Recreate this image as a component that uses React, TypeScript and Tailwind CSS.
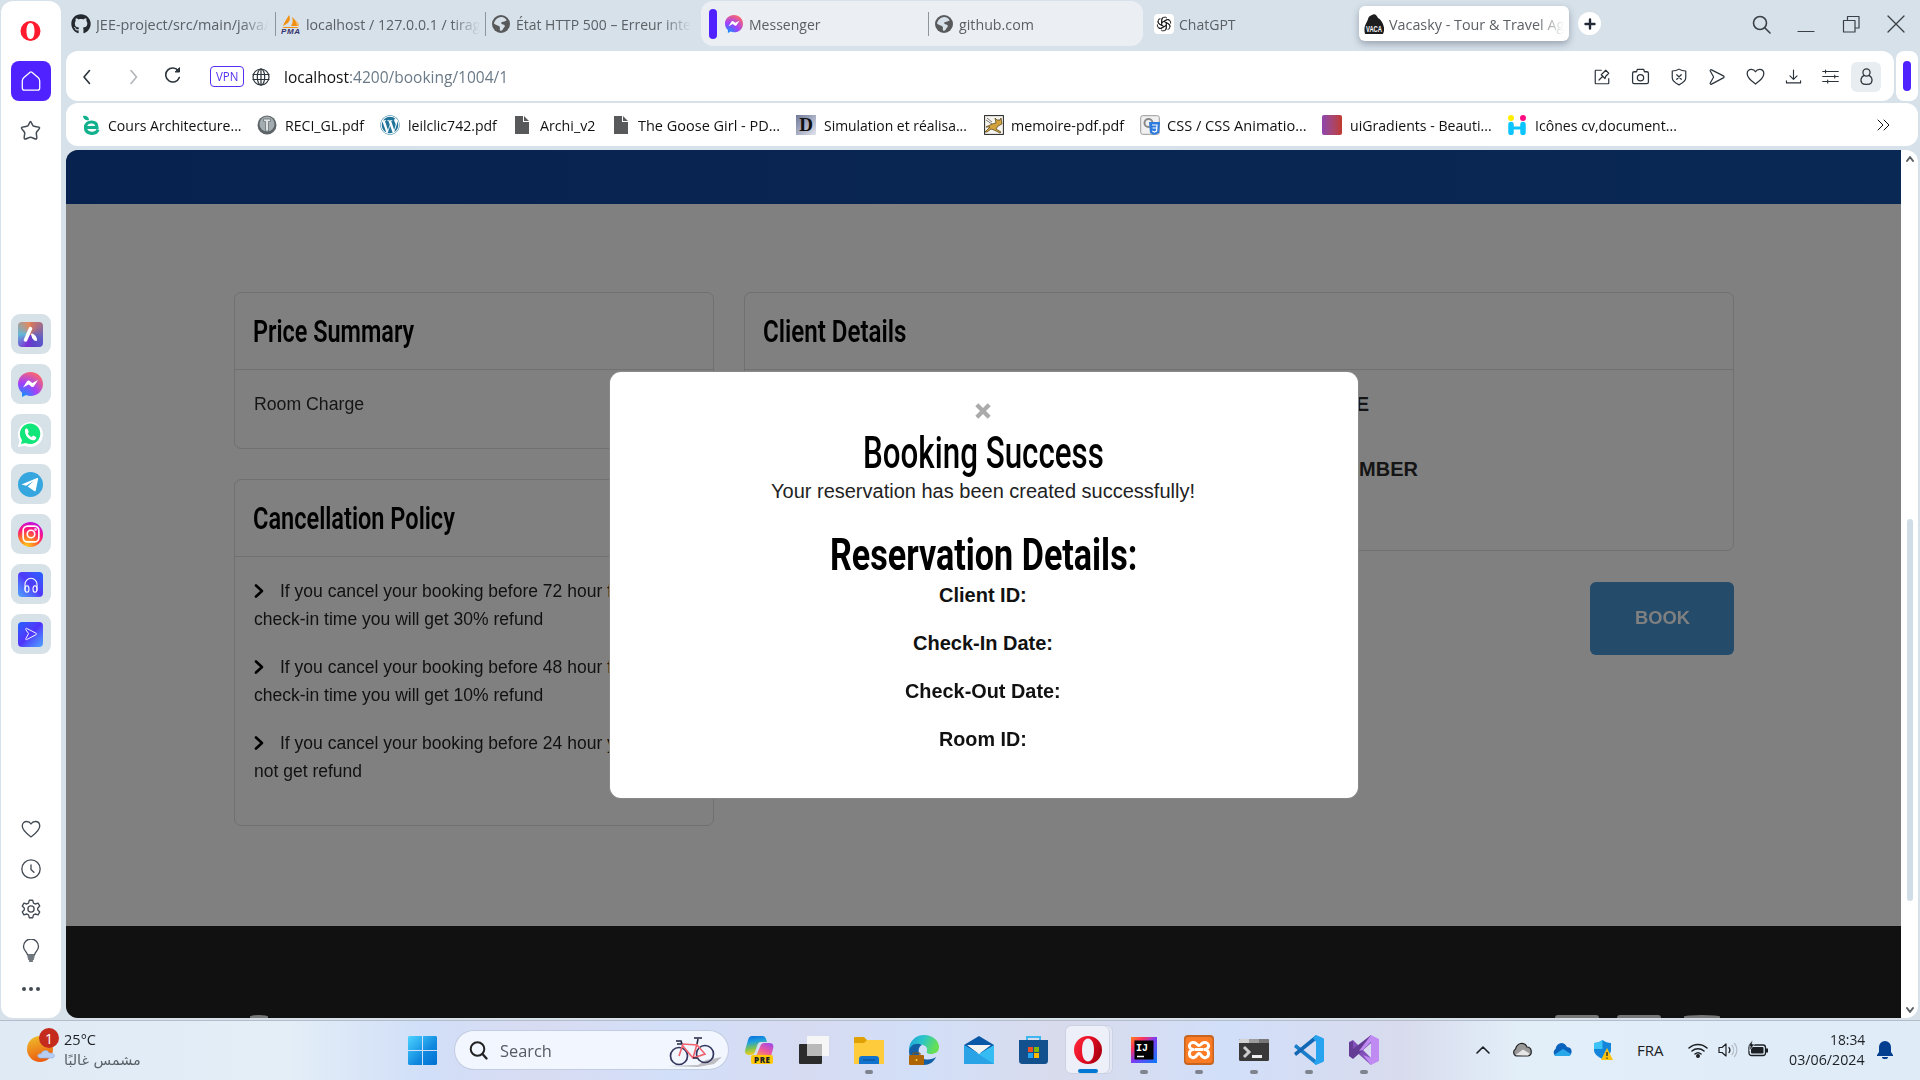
import React, { useLayoutEffect, useRef } from "react";
import { FaGithub, FaWordpress } from "react-icons/fa";

/* Text squeezed or stretched horizontally to fill the width of its box. */
function Fit({ className, children }: { className: string; children: React.ReactNode }) {
  const box = useRef<HTMLDivElement>(null);
  const text = useRef<HTMLSpanElement>(null);
  useLayoutEffect(() => {
    if (!box.current || !text.current) return;
    const k = box.current.clientWidth / text.current.offsetWidth;
    text.current.style.transform = `scaleX(${k})`;
  }, []);
  return (
    <div ref={box} className={`shrink-0 whitespace-nowrap ${className}`}>
      <span ref={text} className="inline-block origin-left">{children}</span>
    </div>
  );
}

type SvgProps = { className?: string; children: React.ReactNode; box?: string };
const Line = ({ className = "", children, box = "0 0 24 24" }: SvgProps) => (
  <svg viewBox={box} className={`block shrink-0 ${className}`} fill="none" stroke="currentColor" strokeWidth="1.6" strokeLinecap="round" strokeLinejoin="round">{children}</svg>
);
const Art = ({ className = "", children, box = "0 0 30 30" }: SvgProps) => (
  <svg viewBox={box} className={`block shrink-0 ${className}`}>{children}</svg>
);

const Globe = ({ className }: { className: string }) => (
  <Art className={className} box="0 0 20 20">
    <circle cx="10" cy="10" r="10" fill="#58595b" />
    <path d="M9 2.500c3-.8 6 1 7.300 3.600-1.500.3-2.300 1.600-4 1.400-1.400 0-2.500 1-1.800 2.200.8 1 3 .5 3.700 2 .5 1.800-1.300 2.300-1.900 3.800-.8 1.500-2.100 2.400-3.300 1.800-.9-1.600.4-3.300-.6-4.500C7 11.500 4 11 2.300 9.600 2.600 6.500 5.500 3 9 2.500z" fill="#d7e1ea" />
  </Art>
);
const Messenger = ({ className, id }: { className: string; id: string }) => (
  <Art className={className} box="0 0 25 25">
    <defs>
      <radialGradient id={id} cx="0.2" cy="1" r="1.1">
        <stop offset="0" stopColor="#0a95ff" /><stop offset="0.5" stopColor="#a040ff" /><stop offset="1" stopColor="#ff6968" />
      </radialGradient>
    </defs>
    <path d="M12.500 0C5.400 0 0 5.200 0 12c0 3.600 1.500 6.600 4 8.800V25l4-2c1.400.6 3 1 4.500 1C19.600 24 25 19 25 12S19.600 0 12.500 0z" fill={`url(#${id})`} />
    <path d="M5 15.500l4-6.300c.6-.8 1.700-1 2.500-.4l2.800 2.100 5.700-3-4 6.400c-.6.800-1.700 1-2.500.4l-2.800-2.100z" fill="#fff" />
  </Art>
);
const FileIcon = ({ className }: { className: string }) => (
  <Art className={className} box="0 0 14 18"><path d="M0 0h8v6h6v12H0zM9 0l5 5H9z" fill="#58595b" /></Art>
);
const Heart = ({ className }: { className: string }) => (
  <Line className={className}><path d="M12 21.500C8 18.500 1.500 14 1.500 8.500 1.500 5 4 3 6.800 3c2.300 0 4.200 1.200 5.200 3 1-1.800 2.900-3 5.200-3 2.800 0 5.300 2 5.300 5.500C22.500 14 16 18.500 12 21.500z" /></Line>
);
const SendArrow = ({ className }: { className: string }) => (
  <Line className={className}><path d="M3 4c-.5-1.500.5-2 1.700-1.500L20.500 10.500c1.300.7 1.300 2 0 2.700L4.700 21.500C3.500 22 2.500 21.500 3 20l4.500-8z" /></Line>
);
const OperaO = ({ className, id }: { className: string; id: string }) => (
  <Art className={className}>
    <defs><linearGradient id={id} x1="0" y1="0" x2="1" y2="0.4"><stop offset="0" stopColor="#ff2b3c" /><stop offset="0.55" stopColor="#e60d25" /><stop offset="1" stopColor="#b00012" /></linearGradient></defs>
    <path fillRule="evenodd" d="M15 1a14 14 0 1 0 0 28 14 14 0 1 0 0-28zm0 2.500c4 0 6 5 6 11.500s-2 11.500-6 11.500S9 21.500 9 15 11 3.500 15 3.500z" fill={`url(#${id})`} />
  </Art>
);

const fade = "[mask-image:linear-gradient(to_right,black_84%,transparent)]";
const sep = "h-6 w-px shrink-0 bg-[#8e959b]";

function TabBar() {
  return (
    <div className="flex h-[51px] shrink-0 items-start text-[15px] leading-[20px] text-[#5b6065]">
      <div className="flex h-[48px] items-center pl-[5px]">
        <FaGithub className="size-5 text-[#24292f]" />
        <div className={`ml-[5px] w-[173px] overflow-hidden ${fade}`}><Fit className="w-[173px]">JEE-project/src/main/java/</Fit></div>
        <div className={`${sep} ml-[6px]`} />
        <Art className="ml-[5px] size-5" box="0 0 20 20">
          <path d="M8 1c2 4 1 8-6 11 1-4 4-7 6-11zm3 2c4 3 5 6 5 9h-6c2-3 2-6 1-9zM1 13h17l-2 1H3z" fill="#f29111" />
          <path d="M14 6c3 2 4 4 4 6h-2c0-2 0-4-2-6z" fill="#f6b35a" />
          <text x="0" y="19.500" fontFamily="Liberation Sans" fontSize="8" fontWeight="700" fontStyle="italic" fill="#34336b" textLength="19">PMA</text>
        </Art>
        <div className={`ml-[5px] w-[174px] overflow-hidden ${fade}`}><Fit className="w-[174px]">localhost / 127.0.0.1 / tirag</Fit></div>
        <div className={`${sep} ml-[5px]`} />
        <Globe className="ml-[6px] size-[18px]" />
        <div className={`ml-[6px] w-[175px] overflow-hidden ${fade}`}><Fit className="w-[175px]">État HTTP 500 – Erreur inte</Fit></div>
      </div>
      <div className="ml-[10px] mt-px flex h-[45px] w-[442px] items-center rounded-xl bg-[#ebeff3] pl-2">
        <div className="h-[30px] w-2 rounded-full bg-[#4f22ff]" />
        <Messenger className="ml-2 size-[18px]" id="msgTab" />
        <Fit className="ml-[6px] w-[72px]">Messenger</Fit>
        <div className={`${sep} ml-[107px]`} />
        <Globe className="ml-[6px] size-[18px]" />
        <Fit className="ml-[6px] w-[75px]">github.com</Fit>
      </div>
      <div className="ml-[11px] flex h-[48px] items-center">
        <div className="flex size-5 items-center justify-center rounded bg-white">
          <Art className="size-4" box="0 0 24 24">
            <g fill="none" stroke="#222" strokeWidth="1.500">
              {[0, 60, 120, 180, 240, 300].map((a) => (
                <path key={a} d="M8.500 14V6.200A4.600 4.600 0 0 1 16.500 3.200M8.500 10l6.800-3.900a4.600 4.600 0 0 1 4.700 0" transform={`rotate(${a} 12 12)`} />
              ))}
            </g>
          </Art>
        </div>
        <Fit className="ml-[5px] w-[57px]">ChatGPT</Fit>
      </div>
      <div className="ml-[123px] mt-[6px] flex h-[35px] w-[210px] items-center rounded-md bg-white pl-[5px] shadow-[0_3px_7px_rgba(60,70,90,0.4)]">
        <Art className="size-5" box="0 0 20 20">
          <path d="M1 20C-1 12 3 9 4 5c1-3 2-3 4-4 3-2 5 1 6 3 3 1 7 8 6 13l-1 3z" fill="#1d1d1f" />
          <text x="2" y="11.800" transform="scale(1 1.550)" fontFamily="Liberation Sans" fontSize="5.800" fontWeight="700" fill="#fff">VACA</text>
        </Art>
        <div className={`ml-[5px] w-[175px] overflow-hidden ${fade}`}><Fit className="w-[175px]">Vacasky - Tour &amp; Travel Ag</Fit></div>
      </div>
      <div className="ml-[9px] mt-3 flex size-[23px] items-center justify-center rounded-full bg-white text-[#222a38]">
        <Line className="size-3" box="0 0 12 12"><path d="M6 1.500v9M1.500 6h9" strokeWidth="2.400" /></Line>
      </div>
      <div className="ml-[151px] flex h-[48px] items-center text-[#3a4045]">
        <Line className="size-[19px]" box="0 0 19 19"><circle cx="8" cy="8" r="6.500" /><path d="M12.700 12.700 18 18" /></Line>
        <Line className="ml-[26px] size-[18px]" box="0 0 18 18"><path d="M1 16.500h16" strokeWidth="1.200" /></Line>
        <Line className="ml-[27px] size-[18px]" box="0 0 18 18"><path d="M1.500 5.500H13V17H1.500zM5.500 5V1.500H17V13h-3.500" strokeWidth="1.200" /></Line>
        <Line className="ml-[27px] size-[18px]" box="0 0 18 18"><path d="M1 1l16 16M17 1 1 17" strokeWidth="1.300" /></Line>
      </div>
    </div>
  );
}

function AddressBar() {
  return (
    <div className="flex h-[50px] shrink-0 gap-[2px]">
      <div className="flex w-[1828px] items-center rounded-xl bg-white text-[#2b333b]">
        <Line className="ml-[14px] mt-px size-4" box="0 0 16 16"><path d="M9.500 1.500 4 8l5.500 6.500" /></Line>
        <Line className="ml-[30px] mt-px size-4 text-[#b0b5ba]" box="0 0 16 16"><path d="M5 1.500 10.500 8 5 14.500" /></Line>
        <Line className="mb-[3px] ml-[23px] size-4" box="0 0 16 16"><path d="M14.300 10.500A7 7 0 1 1 13.500 4" /><path d="M14.500 1v4h-4z" fill="currentColor" strokeWidth="1" /></Line>
        <div className="ml-[29px] mt-px flex h-[21px] w-[34px] items-center justify-center rounded border-[1.5px] border-[#5530ee] text-[12px] text-[#5530ee]"><Fit className="w-[22px]">VPN</Fit></div>
        <Line className="ml-2 mt-px size-[18px]" box="0 0 18 18"><g strokeWidth="1.200"><circle cx="9" cy="9" r="8" /><ellipse cx="9" cy="9" rx="3.700" ry="8" /><path d="M1 6.500h16M1 11.500h16M9 1v16" /></g></Line>
        <Fit className="ml-[14px] mt-[2px] w-[65px] text-[16px] text-[#111]">localhost</Fit>
        <Fit className="mt-[2px] w-[159px] text-[16px] text-[#6b7a88]">:4200/booking/1004/1</Fit>
        <div className="ml-auto mt-px flex items-center gap-[20px] pr-[13px]">
          <Line className="size-[18px]"><path d="M11 3H4a1 1 0 0 0-1 1v16a1 1 0 0 0 1 1h16a1 1 0 0 0 1-1v-6" /><path d="M8 16l4-4M11 9l5 5 1-3 4-4-4-4-4 4z" /></Line>
          <Line className="size-[19px]"><path d="M2 8a2 2 0 0 1 2-2h3l1-3h8l1 3h3a2 2 0 0 1 2 2v11a2 2 0 0 1-2 2H4a2 2 0 0 1-2-2z" /><circle cx="12" cy="13.500" r="4" /></Line>
          <Line className="size-[18px]"><path d="M12 1.500c3 2 6 2.500 9 2.500v9c0 4-5 7.500-9 9.500-4-2-9-5.500-9-9.500V4c3 0 6-.5 9-2.500z" /><path d="M9 9l6 6m0-6-6 6" /></Line>
          <SendArrow className="size-[18px]" />
          <Heart className="size-[19px]" />
          <Line className="size-[17px]"><path d="M12 3v13m-5-5 5 5 5-5M2 18v3h20v-3" /></Line>
          <Line className="size-[17px]"><path d="M1 5h22M1 12h22M1 19h22M5 3v4M18 10v4M8 17v4" /></Line>
          <div className="-ml-2 flex size-[30px] items-center justify-center rounded-md bg-[#e8edf1]">
            <Line className="size-[19px]"><circle cx="12" cy="7" r="4.500" /><path d="M9 10.500c-4 2-5 6-3 9.500 1 1.500 2 2 6 2s5-.5 6-2c2-3.500 1-7.500-3-9.500" /></Line>
          </div>
        </div>
      </div>
      <div className="flex w-[22px] items-center justify-center rounded-lg bg-white"><div className="h-[30px] w-2 rounded-full bg-[#4f22ff]" /></div>
    </div>
  );
}

function Bookmarks() {
  return (
    <div className="mt-[2px] flex h-[43px] w-[1852px] shrink-0 items-center rounded-xl bg-white pt-px text-[15px] leading-5 text-[#111]">
      <Art className="ml-4 h-5 w-[18px]" box="0 0 18 20">
        <path d="M16 14.500c-1 3-3.500 4-6.500 3.800C5.500 18 3.500 16 3.500 12.500S6 7 9.500 7s5.500 2 5.500 5.500H4" fill="none" stroke="#12b08c" strokeWidth="3.200" /><path d="M1 1c3-1 6 1 6 4-3 1-6-1-6-4z" fill="#12b08c" />
      </Art>
      <Fit className="ml-2 w-[134px]">Cours Architecture...</Fit>
      <Art className="ml-[15px] size-5" box="0 0 20 20"><circle cx="10" cy="10" r="9.500" fill="#5d6467" /><circle cx="10" cy="9" r="7.500" fill="#a3acb0" /><path d="M6.500 4h7v2.500h-2V16h-3V6.500h-2z" fill="#dfe3e4" stroke="#6a7376" strokeWidth=".8" /></Art>
      <Fit className="ml-2 w-[79px]">RECI_GL.pdf</Fit>
      <FaWordpress className="ml-4 size-5 shrink-0 text-[#21759b]" />
      <Fit className="ml-2 w-[89px]">leilclic742.pdf</Fit>
      <FileIcon className="ml-[18px] h-[18px] w-[14px]" />
      <Fit className="ml-[11px] w-[55px]">Archi_v2</Fit>
      <FileIcon className="ml-[19px] h-[18px] w-[14px]" />
      <Fit className="ml-[10px] w-[142px]">The Goose Girl - PD...</Fit>
      <div className="ml-4 flex size-5 shrink-0 items-center justify-center bg-linear-to-br from-[#6f7899] to-[#e4e6ee] font-['Liberation_Serif',serif] text-[19px] font-bold">D</div>
      <Fit className="ml-2 w-[143px]">Simulation et réalisa...</Fit>
      <Art className="ml-[17px] size-5" box="0 0 20 20">
        <rect x="0.600" y="0.600" width="18.800" height="18.800" fill="#f6f4ee" stroke="#222" />
        <path d="M11 3l2 2h3l1-2 1 6-4 2-2 3 5 3-1 1-6-3-3-1-4 3H1l5-5-4 0 6-3 4-1z" fill="#d2a33c" stroke="#4d3d16" strokeWidth=".7" /><path d="M2 5l6 4M3 3l5 4" stroke="#555" strokeWidth=".8" />
      </Art>
      <Fit className="ml-[7px] w-[113px]">memoire-pdf.pdf</Fit>
      <Art className="ml-4 size-5" box="0 0 20 20">
        <rect x="0.700" y="0.700" width="18.600" height="18.600" rx="2" fill="#f0f0f0" stroke="#999" /><circle cx="8.500" cy="8" r="4" fill="none" stroke="#8a8a8a" strokeWidth="2" />
        <path d="M9 7h11l-1 11-5 2-4-2z" fill="#2d7bdc" /><path d="M12 10h5l-.4 6-2.300 1-2-1M12.500 13h4" stroke="#fff" fill="none" strokeWidth="1.200" />
      </Art>
      <Fit className="ml-[7px] w-[140px]">CSS / CSS Animatio...</Fit>
      <div className="ml-[15px] size-5 shrink-0 rounded-xs bg-linear-to-r from-[#8e44ad] to-[#c0392b]" />
      <Fit className="ml-2 w-[142px]">uiGradients - Beauti...</Fit>
      <Art className="ml-4 h-5 w-[18px]" box="0 0 18 20"><circle cx="3" cy="3" r="3" fill="#ffee00" /><circle cx="15" cy="3" r="3" fill="#ff0a82" /><path d="M3 9.500v8M15 9.500v8" stroke="#0cc5ff" strokeWidth="5.500" strokeLinecap="round" /><path d="M4 13h10" stroke="#0cc5ff" strokeWidth="3" /></Art>
      <Fit className="ml-[9px] w-[142px]">Icônes cv,document...</Fit>
      <Line className="ml-auto mr-7 h-3 w-[13px]" box="0 0 13 12"><path d="M1 1l5 5-5 5M7 1l5 5-5 5" strokeWidth="1" /></Line>
    </div>
  );
}

const tile = "flex size-10 shrink-0 items-center justify-center rounded-[9px] bg-[#d7e1e8]";

function Sidebar() {
  return (
    <div className="ml-px mt-px flex h-[1017px] w-[60px] shrink-0 flex-col items-center rounded-xl bg-white pr-px text-[#434b54]">
      <Art className="mt-5 h-[20px] w-[21px]"><path fillRule="evenodd" d="M15 0a15 15 0 1 0 0 30 15 15 0 1 0 0-30zm0 3c4 0 6 5 6 12s-2 12-6 12-6-5-6-12S11 3 15 3z" fill="#ff1b2d" /></Art>
      <div className="mt-5 flex size-10 items-center justify-center rounded-lg bg-[#4f22ff] text-white">
        <Line className="size-[22px]"><path d="M11 2.500 4 8.500c-1 1-1.500 2-1.500 3.500v7.500c0 1.500 1 2.500 2.500 2.500h14c1.500 0 2.500-1 2.500-2.500V12c0-1.500-.5-2.500-1.500-3.500l-7-6c-.6-.5-1.400-.5-2 0z" strokeWidth="1.400" /></Line>
      </div>
      <Line className="mt-[18px] size-[23px]"><path d="M12 2.500c.8 0 1.500 3.500 2.800 4.700 1.300 1 6.200.7 6.700 1.900.4 1.300-3 3.500-3.400 5.200-.4 1.700 1.300 5.700.2 6.500-1.200.7-4.400-1.800-6.300-1.800s-5.100 2.500-6.300 1.800c-1.100-.8.600-4.800.2-6.500-.4-1.700-3.800-3.900-3.400-5.200.5-1.200 5.400-.9 6.700-1.900C10.500 6 11.200 2.500 12 2.500z" /></Line>
      <div className="mt-[172px] flex flex-col gap-[10px]">
        <div className={tile}><div className="flex size-[25px] items-center justify-center rounded bg-[conic-gradient(from_0deg,#d9795b,#5e5fc6_30%,#5b45c9_45%,#7a2fd5_55%,#62b8d8_75%,#f28352)]"><Art className="size-[25px]" box="0 0 25 25"><path d="M12.500 6.500 7.500 18" stroke="#fff" strokeWidth="3.500" strokeLinecap="round" /><path d="M13.500 12c3 0 5 3 5 6.500-3 0-4-2-5-6.500z" fill="#fff" stroke="#fff" /></Art></div></div>
        <div className={tile}><Messenger className="size-[25px]" id="msgSide" /></div>
        <div className={tile}><Art className="size-[25px]" box="0 0 25 25"><path d="M0 25l1.500-6.500A12.500 12.500 0 1 1 7 23.700z" fill="#fff" /><path d="M3 22l1-4a10.200 10.200 0 1 1 3.700 3z" fill="#11e67b" /><path d="M7 8c.5-2 2.500-2 3 0l.8 2-1 1.500c1 1.800 2 2.800 4 3.500l1.400-1.400 2.800 1.300c.7.900-.2 3.600-3.500 3.300C10.500 17.500 6.500 13 7 8z" fill="#fff" /></Art></div>
        <div className={tile}><Art className="size-[25px]" box="0 0 25 25"><circle cx="12.500" cy="12.500" r="12.500" fill="#35a6de" /><path d="M3.500 12.500 19 6c1-.3 1.300.2 1.100 1l-2.400 11.500c-.2 1-.8 1-1.500.6l-6.500-4.600 6-5.500-7.600 4.800z" fill="#fff" /></Art></div>
        <div className={tile}><div className="flex size-[25px] items-center justify-center rounded-full bg-[radial-gradient(circle_at_35%_95%,#ffc61a_0%,#ff6a2b_35%,#ff1382_60%,#c913d4_80%,#8f1cff_100%)] text-white"><Line className="size-[18px]"><g strokeWidth="2.200"><rect x="1.500" y="1.500" width="21" height="21" rx="6" /><circle cx="12" cy="12" r="5" /><circle cx="18" cy="6" r=".6" /></g></Line></div></div>
        <div className={tile}><div className="mt-px flex size-[25px] items-center justify-center rounded-sm bg-linear-to-tr from-[#4fa3ff] via-[#5038fa] to-[#1b62ff] text-white"><Line className="size-[16px]"><path d="M3 20V11a9 9 0 0 1 18 0v9" /><ellipse cx="6" cy="18" rx="3" ry="5" /><ellipse cx="18" cy="18" rx="3" ry="5" /></Line></div></div>
        <div className={tile}><div className="flex size-[25px] items-center justify-center rounded-sm bg-linear-to-br from-[#1c60ff] via-[#5032fb] to-[#4fa3ff] text-white"><SendArrow className="size-[14px]" /></div></div>
      </div>
      <div className="mb-[22px] mt-auto flex flex-col items-center gap-5">
        <Heart className="size-5" />
        <Line className="size-5"><circle cx="12" cy="12" r="11" /><path d="M12 7v5.500l3.500 3.500" /></Line>
        <Line className="size-5"><path d="M10 1.500h4l1 3.500 2 1 3.500-1 2 3.500-2.500 2.500v2l2.500 2.500-2 3.500-3.500-1-2 1-1 3.500h-4L9 19l-2-1-3.500 1-2-3.500L4 13v-2L1.500 8.500l2-3.500L7 6l2-1z" /><circle cx="12" cy="12" r="3.700" /></Line>
        <Line className="h-[23px] w-5" box="0 0 20 23"><path d="M6.500 16c0-3-4-4-4-8.500a7.500 7.500 0 0 1 15 0c0 4.500-4 5.500-4 8.500zM7 18h6M7.500 20h5M8.500 22h3" strokeWidth="1.300" /></Line>
        <Art className="h-[14px] w-5" box="0 0 20 14"><circle cx="3" cy="7" r="2" fill="#434b54" /><circle cx="10" cy="7" r="2" fill="#434b54" /><circle cx="17" cy="7" r="2" fill="#434b54" /></Art>
      </div>
    </div>
  );
}

const title = "font-[Roboto,sans-serif] text-[31px] font-semibold leading-[40px] text-black";
const card = "rounded-[7px] border border-[#707070]";
const cardHead = "flex h-[77px] items-center border-b border-[#707070] pl-[18px] pt-px";

function PolicyItem({ first, cut, children }: { first: string; cut: string; children: React.ReactNode }) {
  return (
    <div className="mb-5 text-[18px] leading-7 text-[#111]">
      <div className="flex items-center">
        <Line className="h-[16px] w-[11px]" box="0 0 11 16"><path d="M2 2.500 8 8l-6 5.500" stroke="#000" strokeWidth="2.600" /></Line>
        <Fit className="ml-[15px] w-[322px]">{first}</Fit>
        <span className="pl-[5px]">{cut}</span>
      </div>
      {children}
    </div>
  );
}

function Page() {
  return (
    <div className="relative flex h-[868px] w-[1835px] shrink-0 flex-col overflow-hidden rounded-l-xl bg-[#808080] font-['Liberation_Sans',Arial,sans-serif]">
      <div className="h-[54px] shrink-0 bg-linear-to-r from-[#08224f] to-[#0a2854]" />
      <div className="flex h-[722px] shrink-0 gap-[30px] pl-[168px] pt-[88px]">
        <div className="flex w-[480px] flex-col gap-[30px]">
          <div className={`${card} h-[157px]`}>
            <div className={cardHead}><Fit className={`${title} w-[161px]`}>Price Summary</Fit></div>
            <div className="px-[19px] pt-5 text-[18px] leading-7 text-[#151515]"><Fit className="w-[110px]">Room Charge</Fit></div>
          </div>
          <div className={`${card} h-[347px]`}>
            <div className={cardHead}><Fit className={`${title} w-[202px]`}>Cancellation Policy</Fit></div>
            <div className="px-[19px] pt-5">
              <PolicyItem first="If you cancel your booking before 72 hour" cut="from"><Fit className="w-[289px]">check-in time you will get 30% refund</Fit></PolicyItem>
              <PolicyItem first="If you cancel your booking before 48 hour" cut="from"><Fit className="w-[289px]">check-in time you will get 10% refund</Fit></PolicyItem>
              <PolicyItem first="If you cancel your booking before 24 hour" cut="you will"><Fit className="w-[108px]">not get refund</Fit></PolicyItem>
            </div>
          </div>
        </div>
        <div className="flex w-[990px] flex-col items-end">
          <div className={`${card} h-[259px] w-full`}>
            <div className={cardHead}><Fit className={`${title} w-[143px]`}>Client Details</Fit></div>
            <div className="pt-5 text-[20px] font-bold leading-7 text-[#151515]">
              <div className="w-[624px] text-right">NAME</div>
              <div className="mt-[37px] w-[673px] text-right">NUMBER</div>
            </div>
          </div>
          <button className="mt-[31px] flex h-[73px] w-[144px] items-center justify-center rounded-md bg-[#244b6a] pr-px text-[18px] font-bold text-[#808080]"><Fit className="w-[55px]">BOOK</Fit></button>
        </div>
      </div>
      <div className="flex flex-1 items-end bg-[#111] pl-[184px]">
        <div className="h-[3px] w-[18px] rounded-t-[100%] bg-[#777]" />
        <div className="ml-[1287px] h-[3px] w-[44px] rounded-t-sm bg-[#777]" />
        <div className="ml-[18px] h-[3px] w-[44px] rounded-t-sm bg-[#777]" />
        <div className="ml-[23px] h-[3px] w-[36px] rounded-t-[100%] bg-[#777]" />
      </div>
      <div className="absolute left-[544px] top-[222px] flex h-[426px] w-[748px] flex-col items-center rounded-[11px] bg-white pr-[2px] pt-[21px] text-[20px] text-[#111] shadow-[0_0_0_1px_#888]">
        <div className="flex h-9 items-center"><Line className="size-[18px] text-[#aaa]" box="0 0 16 16"><path d="M2.500 2.500l11 11m0-11-11 11" strokeWidth="3.800" strokeLinecap="butt" /></Line></div>
        <Fit className="h-[48px] w-[241px] font-[Roboto,sans-serif] text-[45px] font-medium leading-[47px] text-black">Booking Success</Fit>
        <Fit className="h-7 w-[424px] leading-7 text-[#222]">Your reservation has been created successfully!</Fit>
        <Fit className="mt-[25px] h-[51px] w-[307px] font-[Roboto,sans-serif] text-[45px] font-bold leading-[50px] text-black">Reservation Details:</Fit>
        <div className="flex flex-col items-center gap-5 font-bold leading-7">
          <Fit className="w-[88px]">Client ID:</Fit>
          <Fit className="w-[140px]">Check-In Date:</Fit>
          <Fit className="w-[156px]">Check-Out Date:</Fit>
          <Fit className="w-[88px]">Room ID:</Fit>
        </div>
      </div>
    </div>
  );
}

function AppSlot({ children, dot }: { children: React.ReactNode; dot?: boolean }) {
  return (
    <div className="flex w-[55px] shrink-0 flex-col items-center pt-[14px]">
      <div className="flex size-[30px] items-center justify-center">{children}</div>
      {dot && <div className="mt-[5px] h-1 w-2 rounded-full bg-[#7e838d]" />}
    </div>
  );
}

function Taskbar() {
  return (
    <div className="flex h-[60px] border-t border-[#b3bcc8] bg-[linear-gradient(90deg,#e0eaf5_0%,#e3eef7_15%,#d1dff8_22%,#d8dcf2_28%,#d2dff8_35%,#d6dbf1_42%,#d2dff8_48%,#d8dbec_55%,#d2dff9_64%,#d8dbed_73%,#e2eef8_79%,#dfebf7_100%)] text-[#1c2024]">
      <div className="relative ml-[27px] mt-[13px] h-[30px] w-[32px]">
        <Art className="h-[30px] w-[32px]" box="0 0 32 30">
          <defs><linearGradient id="sun" x2="0.300" y2="1"><stop stopColor="#edc22d" /><stop offset="1" stopColor="#ed5f10" /></linearGradient></defs>
          <circle cx="13" cy="15" r="13" fill="url(#sun)" />
          <path d="M13 24c-4-1-2-5 1-4 1-4 7-5 8-1 6-1 7 5 3 5z" fill="#b7cdf4" stroke="#8fb0e8" strokeWidth=".6" />
        </Art>
        <div className="absolute -top-[6px] left-3 flex size-5 items-center justify-center rounded-full bg-[#c42b1c] text-[14px] text-white">1</div>
      </div>
      <div className="ml-[5px] pt-[7px] text-[15px] leading-[22px]">
        <Fit className="w-[32px]">25°C</Fit>
        <Fit className="w-[77px] font-['DejaVu_Sans',sans-serif] text-[14px] leading-[20px] text-[#5a6066]">مشمس غالبًا</Fit>
      </div>
      <Art className="ml-[267px] mt-[15px] size-[29px]" box="0 0 29 29">
        <defs><linearGradient id="win" x2="1" y2="1"><stop stopColor="#4bd4ff" /><stop offset=".6" stopColor="#1088df" /><stop offset="1" stopColor="#0070d2" /></linearGradient></defs>
        <path d="M1 0h13v14H0V1zM15 0h13l1 1v13H15zM0 15h14v14H1l-1-1zM15 15h14v13l-1 1H15z" fill="url(#win)" />
      </Art>
      <div className="ml-[18px] mt-[10px] flex h-[38px] w-[273px] items-center rounded-full bg-[#f2f6fe] shadow-[0_0_0_1px_#c3cde1]">
        <Line className="ml-[14px] size-[19px] text-[#222]" box="0 0 19 19"><circle cx="8.500" cy="8" r="6.800" strokeWidth="2" /><path d="M13.500 13 17.500 17.500" strokeWidth="2.300" /></Line>
        <Fit className="ml-[12px] mt-px w-[52px] text-[17px] text-[#555b63]">Search</Fit>
        <Art className="ml-[116px] mt-[3px] h-[32px] w-[54px]" box="0 0 54 32">
          <path d="M0 30l30-1 8-5 16-3-8 7-16 3z" fill="#bdbdc2" />
          <g fill="none" stroke="#33365e" strokeWidth="1.700"><circle cx="11" cy="20" r="8.500" /><circle cx="37" cy="18" r="8.500" /></g>
          <path d="M11 20l4-12 14 1 8 9-12 4L14 9m11 13 4-14" fill="none" stroke="#f0626e" strokeWidth="1.600" />
          <path d="M14 8 13 5H8M14 8H9m20 0 1-5m-4-1h8M25 22h4" fill="none" stroke="#222644" strokeWidth="1.600" />
        </Art>
      </div>
      <div className="ml-[3px] flex">
        <AppSlot>
          <Art className="size-[30px]">
            <defs><linearGradient id="cp1" x2=".2" y2="1"><stop stopColor="#0968d8" /><stop offset=".35" stopColor="#1e9fe0" /><stop offset=".7" stopColor="#82c34f" /><stop offset="1" stopColor="#f2cd21" /></linearGradient><linearGradient id="cp2" x1=".8" x2=".2" y2="1"><stop stopColor="#a349e8" /><stop offset=".6" stopColor="#f05c98" /><stop offset="1" stopColor="#fb9b51" /></linearGradient></defs>
            <path d="M8 1h11c2 0 3 2 4 6h-6c-2 0-3 1-4 4l-2 6c-1 2-2 3-4 3-6 0-7-2-5-8L4 5c1-3 2-4 4-4z" fill="url(#cp1)" />
            <path d="M20 8h5c4 0 5 2 4 6l-2 7H12l4-9c1-3 2-4 4-4z" fill="url(#cp2)" />
            <rect x="7" y="20" width="22" height="9" rx="2" fill="#ffc80b" />
            <text x="10" y="27.500" fontFamily="Open Sans" fontSize="8" fontWeight="800" textLength="16" fill="#222">PRE</text>
          </Art>
        </AppSlot>
        <AppSlot><Art className="size-[30px]"><rect y="9" width="23" height="20" rx="1" fill="#2b2b2b" /><rect x="8" y="1" width="22" height="20" rx="1" fill="#f6f6f6" /><path d="M8 9h15v12H8z" fill="#b9b9b9" /></Art></AppSlot>
        <AppSlot dot><Art className="size-[30px]"><path d="M0 3c0-1 1-1 1-1h9l3 3h16l1 1v6H0z" fill="#e0a106" /><path d="M0 8h10l3-3h17v24H0z" fill="#fdcb3c" /><path d="M5 29v-5c0-2 1-3 3-3h14c2 0 3 1 3 3v5z" fill="#1273ce" /><path d="M9 25h12" stroke="#0b4b91" /></Art></AppSlot>
        <AppSlot>
          <Art className="size-[30px]">
            <defs><linearGradient id="ed" x2="1" y2=".3"><stop stopColor="#1aa1e2" /><stop offset=".5" stopColor="#2cc5c7" /><stop offset="1" stopColor="#66e052" /></linearGradient></defs>
            <path d="M0 15C0 6 7 0 15 0c9 0 15 6 15 12 0 5-4 7-8 7-3 0-5-1-4-3 1-5-4-7-8-6-5 1-9 5-10 5z" fill="url(#ed)" />
            <path d="M0 16c1-6 7-9 13-6-4 1-5 9 0 13 5 3 11 1 14-1-2 5-7 8-12 8C6 30 0 24 0 16z" fill="#125fa6" />
            <rect y="20" width="15" height="10" rx="1" fill="#ad6507" /><path d="M4 20v-2h7v2" stroke="#8b5006" fill="none" /><circle cx="7.500" cy="25" r="1" fill="#ffd23e" />
          </Art>
        </AppSlot>
        <AppSlot><Art className="size-[30px]"><path d="M0 10 15 1l15 9v8H0z" fill="#0a57a8" /><path d="M3 10h24l-12 9z" fill="#f3f3f3" /><path d="M0 10l15 9 15-9v19H0z" fill="#35bdf3" /><path d="M0 10l30 19H0z" fill="#2aa2e6" /></Art></AppSlot>
        <AppSlot><Art className="size-[30px]"><path d="M8 7V2h13v5" fill="none" stroke="#3fb6ee" strokeWidth="2" /><path d="M0 5h29v20c0 3-1 4-4 4H4c-3 0-4-1-4-4z" fill="#12518e" /><path d="M9 12h5v5H9z" fill="#f25022" /><path d="M15 12h5v5h-5z" fill="#7fba00" /><path d="M9 18h5v5H9z" fill="#20a4ef" /><path d="M15 18h5v5h-5z" fill="#ffb900" /></Art></AppSlot>
        <div className="ml-[4px] mt-[4px] h-[49px] w-[48px] rounded-md border border-[#ccd2e2] bg-[#e4e8f5]">
          <div className="flex h-[47px] w-[43px] flex-col items-center rounded-md bg-[#edf0f9] pt-[9px] shadow-[1px_0_0_#cdd2e2]">
            <OperaO className="size-[30px]" id="opTask" />
            <div className="mt-1 h-1 w-5 shrink-0 rounded-full bg-[#0078d4]" />
          </div>
        </div>
        <div className="ml-[3px] flex">
          <AppSlot dot>
            <Art className="size-[26px]" box="0 0 26 26">
              <defs><linearGradient id="ij" x2="1" y2="1"><stop stopColor="#fc801d" /><stop offset=".25" stopColor="#fe315d" /><stop offset=".5" stopColor="#7c3cf4" /><stop offset="1" stopColor="#087cfa" /></linearGradient></defs>
              <rect width="26" height="26" fill="url(#ij)" /><rect x="3.500" y="3.500" width="19" height="19" /><text x="5" y="13.500" fontFamily="Liberation Mono" fontWeight="700" fontSize="10" fill="#fff">IJ</text><path d="M6 19.500h7" stroke="#fff" strokeWidth="1.500" />
            </Art>
          </AppSlot>
          <AppSlot dot><Art className="size-[30px]"><rect width="30" height="30" rx="4" fill="#c76520" /><rect x="1.500" y="2" width="27" height="26" rx="3" fill="#fa7b23" /><path d="M9.500 14.500C3 14 5 6.500 10 7.500c3 .5 3 3 5 3s2-2.500 5-3c5-1 7 6.500.5 7C27 15 25 24 20 22.500c-3-.8-3-4-5-4s-2 3.200-5 4C5 24 3 15 9.500 14.500zM11 14.500h8" fill="none" stroke="#fff" strokeWidth="3" strokeLinejoin="round" /></Art></AppSlot>
          <AppSlot dot><Art className="size-[30px]"><rect y="4" width="30" height="22" rx="1.500" fill="#393939" /><path d="M1 4h9v4H0V5z" fill="#d2d2d2" /><path d="M10 4h10v4H10z" fill="#9c9c9c" /><path d="M20 4h9l1 1v3H20z" fill="#777" /><path d="M5 12l5 5-5 5" fill="none" stroke="#ccc" strokeWidth="3" /><path d="M13 21.500h10" stroke="#eee" strokeWidth="3" /></Art></AppSlot>
          <AppSlot dot><Art className="size-[30px]"><path d="M2 9 22 25v5L0 12z" fill="#1b7ecb" /><path d="M2 21 22 5V0L0 18z" fill="#1268b4" /><path d="M22 0l7 3 1 1v22l-1 1-7 3-2-2 2-4V7l-3-4z" fill="#27a3f0" /></Art></AppSlot>
          <AppSlot dot><Art className="size-[30px]"><path d="M0 7l4-2 18 18v7L4 14v8l-4-2z" fill="#8151b9" /><path d="M0 21l4 3L22 8V0L4 14V6L0 8z" fill="#643c95" /><path d="M10 16 22 0l8 4v22l-8 4-8-10 8 3V7l-8 8z" fill="#c08af3" /></Art></AppSlot>
        </div>
      </div>
      <div className="ml-auto flex items-center pb-[2px] pr-[27px] text-[15px]">
        <Line className="h-2 w-[14px]" box="0 0 14 8"><path d="M1 7l6-6 6 6" /></Line>
        <Art className="ml-[22px] h-[15px] w-5" box="0 0 20 15"><path d="M4 14a4 4 0 0 1-.5-7C5 1 12-1 15 5c5 0 6 8 1 9z" fill="#999" stroke="#222" strokeWidth="1.200" /><path d="M3.500 13 11 7.500l6.500 4-1.500 2z" fill="#e6e6e6" /></Art>
        <Art className="ml-5 h-[15px] w-5" box="0 0 20 15"><path d="M4 14a4 4 0 0 1-.5-7C5 0 12-1 15 5c6 0 6 8 1 9z" fill="#0a64bd" /><path d="M2 13 11 7l8 5c-1 2-2 2-3 2H4z" fill="#28a8ea" /></Art>
        <Art className="ml-[21px] size-5" box="0 0 20 20"><path d="M1 3c3 0 6-1 8.500-3C12 2 15 3 18 3v7c0 4-4 7-8.500 9C5 17 1 14 1 10z" fill="#1386dc" /><path d="M1 3c3 0 6-1 8.500-3v9H1z" fill="#3dc3f6" /><path d="M14 8l6 12H8z" fill="#ffc20e" /><path d="M14 12v4m0 1.500v1.200" stroke="#222" strokeWidth="1.300" /></Art>
        <Fit className="ml-[24px] mt-px w-[26px]">FRA</Fit>
        <Line className="ml-[25px] h-4 w-5" box="0 0 20 16"><path d="M1 6a13 13 0 0 1 18 0M4 9a9 9 0 0 1 12 0M7 12a4.500 4.500 0 0 1 6 0" strokeWidth="1.500" /><circle cx="10" cy="14" r="1.200" fill="currentColor" /></Line>
        <Line className="ml-[10px] h-4 w-5" box="0 0 20 16"><path d="M1 5.500h3L8 2v12l-4-3.500H1z" strokeWidth="1.200" /><path d="M11 5.500a4 4 0 0 1 0 5" strokeWidth="1.200" /><path d="M14 3.500a7 7 0 0 1 0 9M16.500 1.500a10 10 0 0 1 0 13" strokeWidth="1.200" stroke="#b2bbc5" /></Line>
        <Art className="mb-[2px] ml-[10px] h-[17px] w-5" box="0 0 20 17"><rect x="1" y="5" width="16.500" height="10.500" rx="2.500" fill="none" stroke="#1c2024" strokeWidth="1.300" /><rect x="3" y="7" width="12.500" height="6.500" rx="1" fill="#1c2024" /><path d="M18 8.500h2v4h-2z" fill="#1c2024" /><path d="M4.500 0 0 6h2.300L1.500 11l5-7H4z" fill="#1c2024" stroke="#e1edf7" strokeWidth=".6" /></Art>
        <div className="mb-[2px] ml-[21px] flex flex-col items-end leading-5"><Fit className="w-[35px]">18:34</Fit><Fit className="w-[76px]">03/06/2024</Fit></div>
        <Art className="ml-3 h-[19px] w-4" box="0 0 16 19"><path d="M2 7a6 6 0 0 1 12 0v5l2 3v1H0v-1l2-3zM5 17h6a3 2 0 0 1-6 0z" fill="#053f8f" /></Art>
      </div>
    </div>
  );
}

export default function App() {
  return (
    <div className="h-[1080px] w-[1920px] overflow-hidden bg-[#d7e1ea] font-['Open_Sans','Noto_Sans',sans-serif]">
      <div className="flex h-[1020px]">
        <Sidebar />
        <div className="ml-[5px] flex w-[1854px] flex-col">
          <TabBar />
          <AddressBar />
          <Bookmarks />
          <div className="mt-[4px] flex">
            <Page />
            <div className="flex h-[868px] w-[17px] flex-col items-center rounded-r-xl bg-white text-[#5a5e62]">
              <Line className="mt-[5px] size-2" box="0 0 8 8"><path d="M1 6l3-4 3 4" strokeWidth="2" /></Line>
              <div className="ml-px mt-[356px] h-[382px] w-[6px] rounded-full bg-[#d0dde6]" />
              <Line className="mb-1 mt-auto size-2" box="0 0 8 8"><path d="M1 2l3 4 3-4" strokeWidth="2" /></Line>
            </div>
          </div>
        </div>
      </div>
      <Taskbar />
    </div>
  );
}
